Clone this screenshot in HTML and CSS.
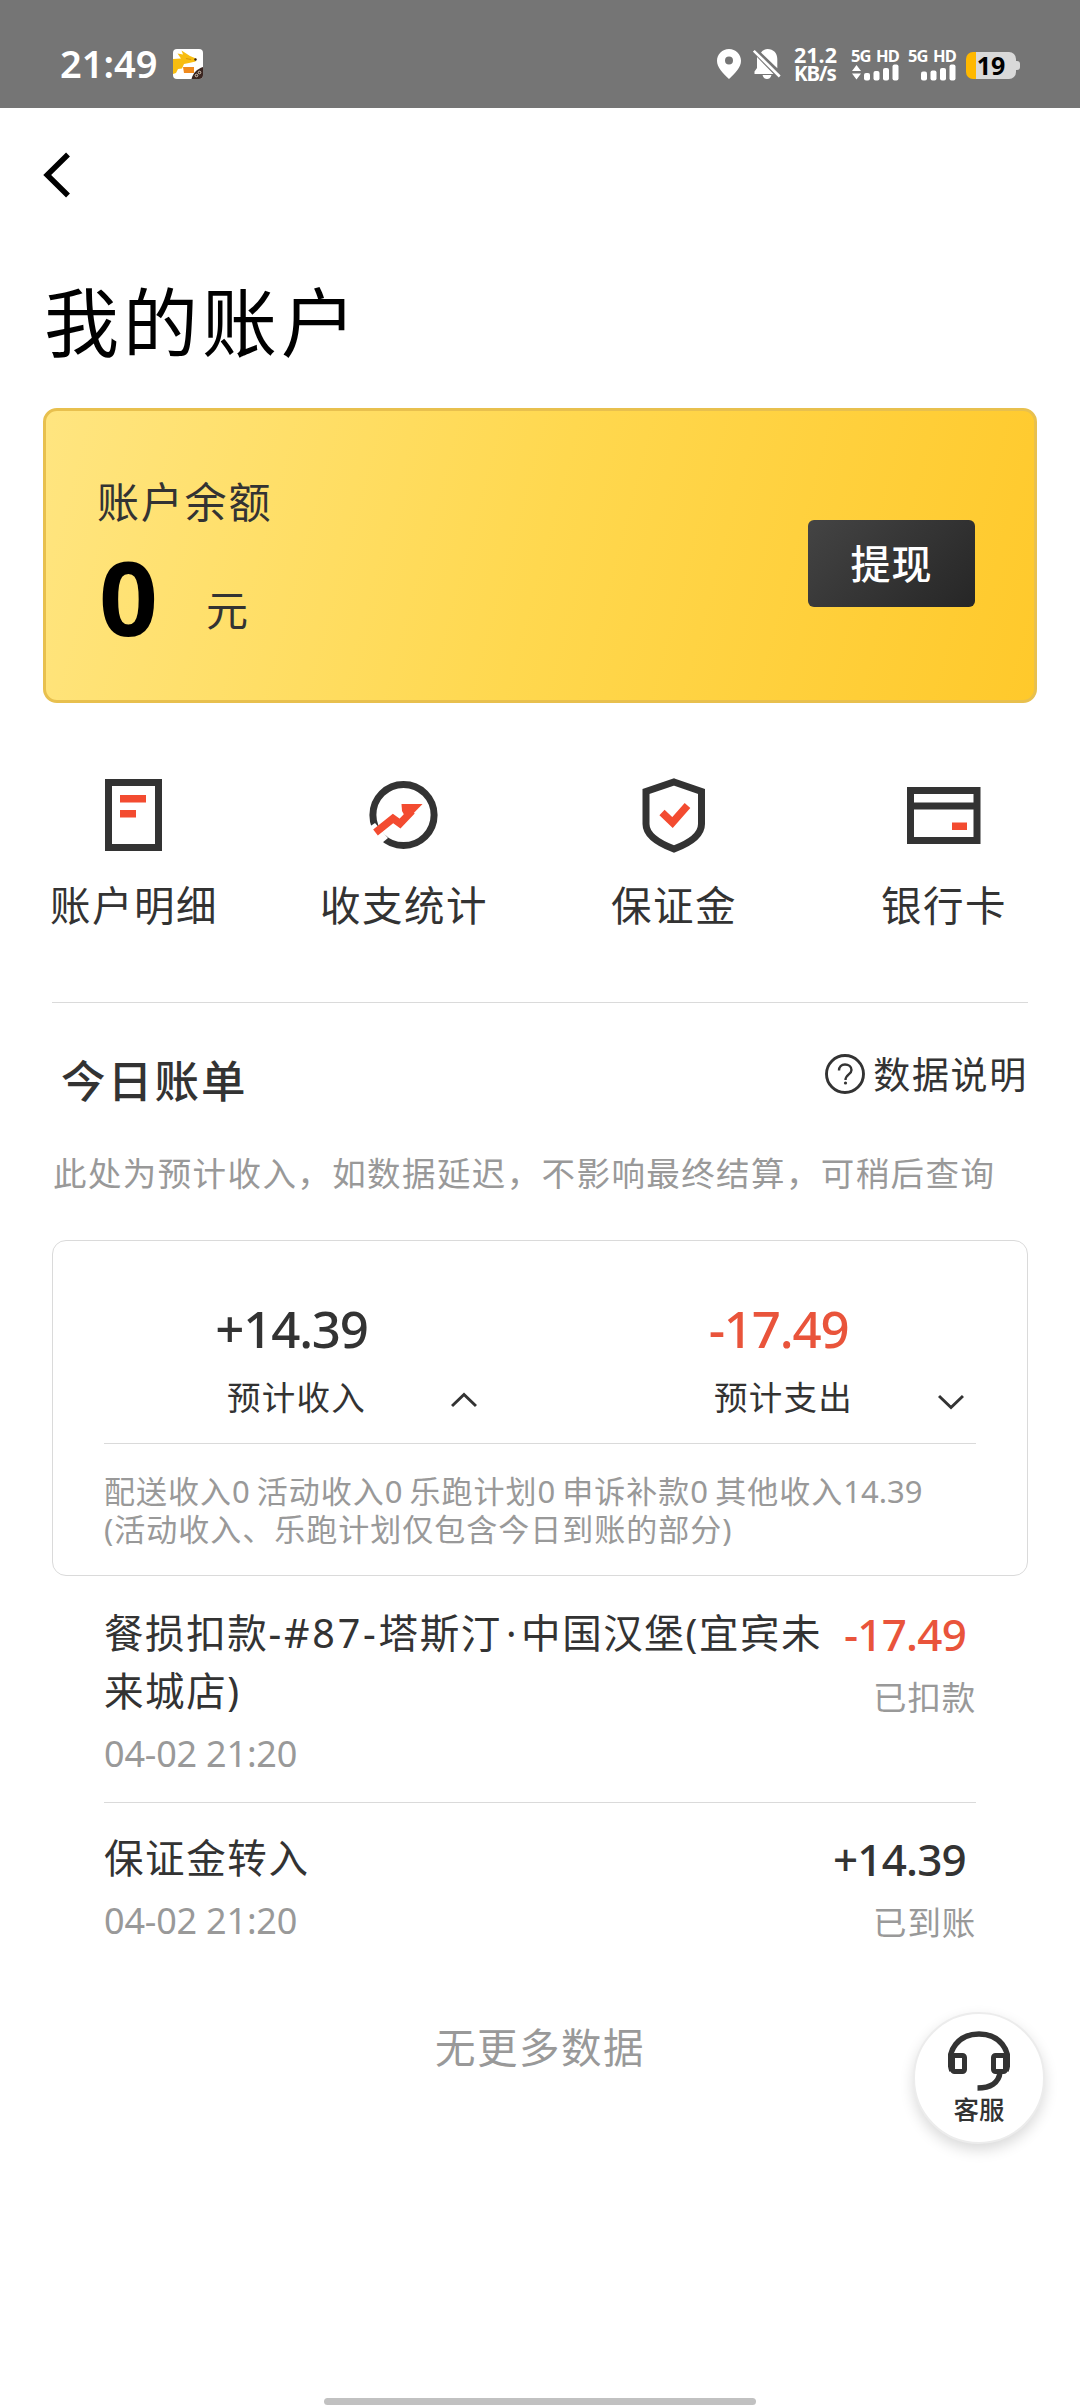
FILE: index.html
```html
<!DOCTYPE html>
<html lang="zh-CN">
<head>
<meta charset="utf-8">
<title>我的账户</title>
<link rel="stylesheet" href="styles.css">
</head>
<body>
<header class="status">
  <span class="clock">21:49</span>
  <svg class="app-badge" width="30" height="30" viewBox="0 0 30 30">
    <defs><clipPath id="badge"><rect width="30" height="30" rx="4"/></clipPath></defs>
    <g clip-path="url(#badge)">
      <rect width="30" height="30" fill="#fff"/>
      <path d="M0 10 8 9.500 4.500 4.500 10 5.500 8.500 1.500 17 7 23 9.500 22.500 12.500 16 14 11 15 9 19.500 5 20 3 24 0 25Z" fill="#f8bd10"/>
      <path d="M10 18H21V24H11Z" fill="#f08a1d"/>
      <path d="M13 9.500 18 10.500" stroke="#d99a10" stroke-width="1.200"/>
      <circle cx="22.500" cy="10.500" r="1.200" fill="#3b2412"/>
      <path d="M30 18V30H18.500C20 24 24 20 30 18Z" fill="#3a2520"/>
      <circle cx="23.500" cy="26.500" r="1.300" fill="none" stroke="#d8c8b8"/>
      <circle cx="26.500" cy="23.500" r="1.300" fill="none" stroke="#d8c8b8"/>
    </g>
  </svg>
  <div class="status-right">
    <svg class="pin" width="24" height="30" viewBox="0 0 24 30"><path fill="#fff" fill-rule="evenodd" d="M12 0C5.300 0 0 5.200 0 11.800 0 18.500 5.500 24 12 30 18.500 24 24 18.500 24 11.800 24 5.200 18.700 0 12 0ZM12 7.600a4 4 0 1 1 0 8 4 4 0 0 1 0-8Z"/></svg>
    <svg class="bell" width="28" height="30" viewBox="0 0 28 30"><path fill="#fff" d="M8 3.500C9.500 1.500 11.700 0 14.500 0 20.500 0 24.300 4.200 24.300 10V19.300ZM4 8 20.500 25H1.500V22.500L4 19ZM9.500 26H18.500C17.500 29 16 30 14 30S10.500 29 9.500 26Z"/><path d="M.8 1.800 26.700 27.500" stroke="#fff" stroke-width="2.600"/></svg>
    <div class="speed"><span>21.2</span><span class="unit">KB/s</span></div>
    <div class="signal">
      <span>5G HD</span>
      <svg width="48" height="17" viewBox="0 0 48 17" fill="#fff"><path d="M1 7 5.500 1 10 7ZM1 9.500H10L5.500 15.500Z"/><rect x="13" y="9" width="6" height="7.500" rx="2"/><rect x="22.500" y="7" width="6" height="9.500" rx="2"/><rect x="32" y="4" width="6" height="12.500" rx="2"/><rect x="41.500" y="0.500" width="6" height="16" rx="2"/></svg>
    </div>
    <div class="signal second">
      <span>5G HD</span>
      <svg width="48" height="17" viewBox="0 0 48 17" fill="#fff"><rect x="13" y="7.500" width="6" height="9" rx="2"/><rect x="22.500" y="6.500" width="6" height="10" rx="2"/><rect x="32" y="4" width="6" height="12.500" rx="2"/><rect x="41.500" y="0.500" width="6" height="16" rx="2"/></svg>
    </div>
    <div class="battery"><span>19</span></div>
  </div>
</header>

<nav class="nav">
  <svg width="30" height="46" viewBox="0 0 30 46"><path d="M27 2.500 6.200 23 27 43.500" fill="none" stroke="#000" stroke-width="5.500"/></svg>
</nav>
<h1 class="title">我的账户</h1>

<section class="balance">
  <div>
    <div class="balance-label">账户余额</div>
    <div class="balance-row"><strong>0</strong><span>元</span></div>
  </div>
  <button class="withdraw">提现</button>
</section>

<section class="shortcuts">
  <div class="shortcut">
    <svg width="76" height="76" viewBox="0 0 76 76"><path d="M12.500 5.500H62.500V70.500H12.500Z" fill="none" stroke="#333" stroke-width="7"/><path d="M24 18H50V25.500H24ZM24 33H40V40.500H24Z" fill="#f34b30"/></svg>
    <span>账户明细</span>
  </div>
  <div class="shortcut">
    <svg width="76" height="76" viewBox="0 0 76 76"><circle cx="37.500" cy="38" r="30.600" fill="none" stroke="#333" stroke-width="7"/><path d="M0 52 9 46 22 61 10 71Z" fill="#fff"/><path d="M9.500 55.500 27 41.500 34 46.500 46 34" fill="none" stroke="#f34b30" stroke-width="7.500"/><path d="M35.500 27H56.500L41 43 36 34Z" fill="#f34b30"/></svg>
    <span>收支统计</span>
  </div>
  <div class="shortcut">
    <svg width="76" height="76" viewBox="0 0 76 76"><path d="M38 5 65.500 14.500V47C65.500 58 54 66 38 72 22 66 10 58 10 47V14.500Z" fill="none" stroke="#333" stroke-width="7"/><path d="M26 35.500 36.500 45.500 51.500 28.500" fill="none" stroke="#f34b30" stroke-width="7.500"/></svg>
    <span>保证金</span>
  </div>
  <div class="shortcut">
    <svg width="76" height="76" viewBox="0 0 76 76"><path d="M4.500 13.500H71V63.500H4.500ZM4.500 29H71" fill="none" stroke="#333" stroke-width="7"/><path d="M46 45.500H61V53H46Z" fill="#f34b30"/></svg>
    <span>银行卡</span>
  </div>
</section>

<main class="bill">
  <div class="bill-head">
    <h2>今日账单</h2>
    <div class="explain">
      <svg width="40" height="40" viewBox="0 0 40 40" fill="none" stroke="#333"><circle cx="20" cy="20" r="18.500" stroke-width="2.900"/><path d="M14 16.500C14 12.500 16.500 10.500 20 10.500S26.500 12.700 26.500 16C26.500 20.500 20.500 20.500 20.500 26" stroke-width="2.400"/><circle cx="20.500" cy="29" r="1.600" fill="#333" stroke="none"/></svg>
      <span>数据说明</span>
    </div>
  </div>
  <p class="notice">此处为预计收入，如数据延迟，不影响最终结算，可稍后查询</p>

  <section class="summary">
    <div class="totals">
      <div class="total">
        <div class="sum">+14.39</div>
        <div class="sum-label"><span>预计收入</span><svg width="26" height="16" viewBox="0 0 26 16"><path d="M1 14 13 2.500 25 14" fill="none" stroke="#333" stroke-width="3"/></svg></div>
      </div>
      <div class="total">
        <div class="sum minus">-17.49</div>
        <div class="sum-label"><span>预计支出</span><svg class="down" width="26" height="16" viewBox="0 0 26 16"><path d="M1 2 13 13.500 25 2" fill="none" stroke="#333" stroke-width="3"/></svg></div>
      </div>
    </div>
    <p class="detail">配送收入0 活动收入0 乐跑计划0 申诉补款0 其他收入<span class="figure">14.39</span><br>(活动收入、乐跑计划仅包含今日到账的部分)</p>
  </section>

  <ul class="records">
    <li class="record">
      <div class="what"><div class="name">餐损扣款<span class="order">-#87-</span>塔斯汀<span class="dot">·</span>中国汉堡(宜宾未来城店)</div><div class="date">04-02 21:20</div></div>
      <div class="result"><div class="amount minus">-17.49</div><div class="state">已扣款</div></div>
    </li>
    <li class="record">
      <div class="what"><div class="name">保证金转入</div><div class="date">04-02 21:20</div></div>
      <div class="result"><div class="amount">+14.39</div><div class="state">已到账</div></div>
    </li>
  </ul>
  <p class="end">无更多数据</p>
</main>

<div class="service">
  <svg width="62" height="62" viewBox="0 0 62 62" fill="none" stroke="#333"><path d="M4 41C-3 19 12 4 31 4S65 19 58 41" stroke-width="5.500"/><rect x="4.500" y="25.500" width="12" height="16" rx="2" stroke-width="5"/><rect x="45.500" y="25.500" width="12" height="16" rx="2" stroke-width="5"/><path d="M52 42C51 53 42 58 29.500 58" stroke-width="5.500"/></svg>
  <span>客服</span>
</div>
<div class="home-bar"></div>
</body>
</html>
```

FILE: styles.css
```css
* { box-sizing: border-box; margin: 0; padding: 0; }
body {
  position: relative;
  width: 1080px;
  height: 2408px;
  overflow: hidden;
  background: #fff;
  color: #333;
  font-family: "Noto Sans", "Noto Sans CJK SC", sans-serif;
}
svg { display: block; flex: none; }

.status {
  display: flex;
  height: 108px;
  padding: 20px 60px 0;
  align-items: center;
  background: #757575;
  color: #fff;
}
.clock { width: 113px; margin-top: -3px; font-size: 38px; font-weight: 600; line-height: 40px; }
.status-right { display: flex; align-items: center; margin-left: auto; }
.bell { margin-left: 12px; }
.speed {
  display: flex;
  flex-direction: column;
  width: 43px;
  margin: -1px 0 0 13px;
  font-size: 21.5px;
  font-weight: 700;
  line-height: 19px;
  white-space: nowrap;
}
.unit { font-size: 20.5px; letter-spacing: -1.1px; }
.signal {
  width: 48px;
  margin: -1px 0 0 14px;
  font-size: 16.5px;
  font-weight: 700;
  letter-spacing: -.9px;
  word-spacing: 2px;
  line-height: 17px;
  white-space: nowrap;
}
.second { margin-left: 9px; }
.battery {
  position: relative;
  width: 50px;
  height: 27px;
  margin: 3px 4px 0 10px;
  border-radius: 7px;
  background: linear-gradient(90deg, #ffb800 10px, #d9d9d9 10px);
  color: #000;
  font-size: 25px;
  font-weight: 700;
  line-height: 26px;
  text-align: center;
}
.battery::after {
  content: "";
  position: absolute;
  right: -4px;
  top: 9px;
  width: 4px;
  height: 9px;
  border-radius: 0 3px 3px 0;
  background: #d9d9d9;
}

.nav { display: flex; align-items: center; height: 133px; padding-left: 41px; }
.title {
  padding-left: 44px;
  color: #000;
  font-size: 75px;
  font-weight: 400;
  letter-spacing: 4px;
  line-height: 162px;
}

.balance {
  display: flex;
  justify-content: space-between;
  align-items: flex-start;
  width: 994px;
  height: 295px;
  margin: 5px 0 0 43px;
  padding: 62px 59px 0 51px;
  border: 3px solid #e8c04e;
  border-radius: 14px;
  background: linear-gradient(105deg, #ffe580 0%, #ffd84f 50%, #ffc92b 100%);
}
.balance-label { font-size: 42px; letter-spacing: 1.8px; line-height: 58px; }
.balance-row { display: flex; align-items: flex-start; }
.balance-row strong { width: 109px; padding-left: 2px; color: #000; font-size: 103px; line-height: 130px; }
.balance-row span { padding-top: 50px; font-size: 42px; line-height: 58px; }
.withdraw {
  width: 167px;
  height: 87px;
  margin-top: 47px;
  border: 0;
  border-radius: 6px;
  background: linear-gradient(135deg, #444, #262626);
  color: #fff;
  font: 500 40px/87px "Noto Sans", "Noto Sans CJK SC", sans-serif;
  letter-spacing: 1px;
}

.shortcuts { display: grid; grid-template-columns: repeat(4, 270px); margin: 74px 0 0 -1px; }
.shortcut { display: flex; flex-direction: column; align-items: center; gap: 26px; font-size: 40.5px; letter-spacing: 1.500px; line-height: 54px; }

.bill { margin: 69px 52px 0; border-top: 1px solid #dadada; }
.bill-head { display: flex; justify-content: space-between; margin-top: 48px; padding-left: 9px; }
.bill-head h2 { font-size: 44.5px; font-weight: 500; letter-spacing: 2.2px; line-height: 60px; }
.explain { display: flex; gap: 8px; align-items: center; height: 48px; font-size: 37px; letter-spacing: 1.700px; line-height: 48px; }
.explain svg { margin-top: -3px; }
.notice { margin: 38px 0 0 1px; color: #999; font-size: 33.500px; letter-spacing: 1.400px; line-height: 49px; white-space: nowrap; }

.summary { height: 336px; margin-top: 42px; padding-top: 57px; border: 1px solid #dadada; border-radius: 14px; }
.totals { display: grid; grid-template-columns: 1fr 1fr; }
.total { text-align: center; }
.sum { padding-right: 10px; font-size: 51px; font-weight: 500; letter-spacing: -1.2px; line-height: 60px; }
.sum-label { display: grid; grid-template-columns: 1fr auto 1fr; align-items: center; margin-top: 17px; font-size: 33.500px; letter-spacing: 1.200px; line-height: 44px; }
.sum-label span { grid-column: 2; }
.sum-label svg { margin: 6px 0 0 85px; }
.sum-label .down { margin-top: 10px; }
.minus { color: #e9543b; }
.detail { margin: 24px 51px 0; padding-top: 28px; border-top: 1px solid #dadada; color: #999; font-size: 31px; letter-spacing: 1px; word-spacing: -3px; line-height: 38px; white-space: nowrap; }
.figure { letter-spacing: 0; }

.records { margin: 0 52px; list-style: none; }
.record { display: flex; justify-content: space-between; padding: 28px 0 26px; }
.record + .record { padding-top: 26px; border-top: 1px solid #dadada; }
.what { width: 724px; }
.name { font-size: 39.500px; letter-spacing: 1.600px; line-height: 58px; }
.order { letter-spacing: 2.8px; }
.dot { margin: 0 3px 0 4px; }
.date { margin-top: 12px; color: #999; font-size: 36px; letter-spacing: -.2px; line-height: 44px; }
.result { padding-top: 1px; text-align: right; white-space: nowrap; }
.amount { padding-right: 10px; font-size: 44px; font-weight: 500; letter-spacing: -.8px; line-height: 58px; }
.state { margin-top: 12px; color: #999; font-size: 33.500px; letter-spacing: 0.800px; line-height: 44px; }
.record + .record .date { margin-top: 12px; }
.end { margin-top: 48px; color: #999; font-size: 40.500px; letter-spacing: 1.500px; line-height: 60px; text-align: center; }

.service {
  position: absolute;
  left: 913px;
  top: 2012px;
  display: flex;
  flex-direction: column;
  align-items: center;
  width: 132px;
  height: 132px;
  padding-top: 16px;
  border: 2px solid #ececec;
  border-radius: 50%;
  background: #fff;
  box-shadow: 0 6px 14px rgba(0, 0, 0, .15);
  font-size: 25.500px;
  font-weight: 500;
  line-height: 34px;
}
.home-bar { position: absolute; left: 324px; top: 2398px; width: 432px; height: 7px; border-radius: 4px; background: #c1c1c1; }
```
